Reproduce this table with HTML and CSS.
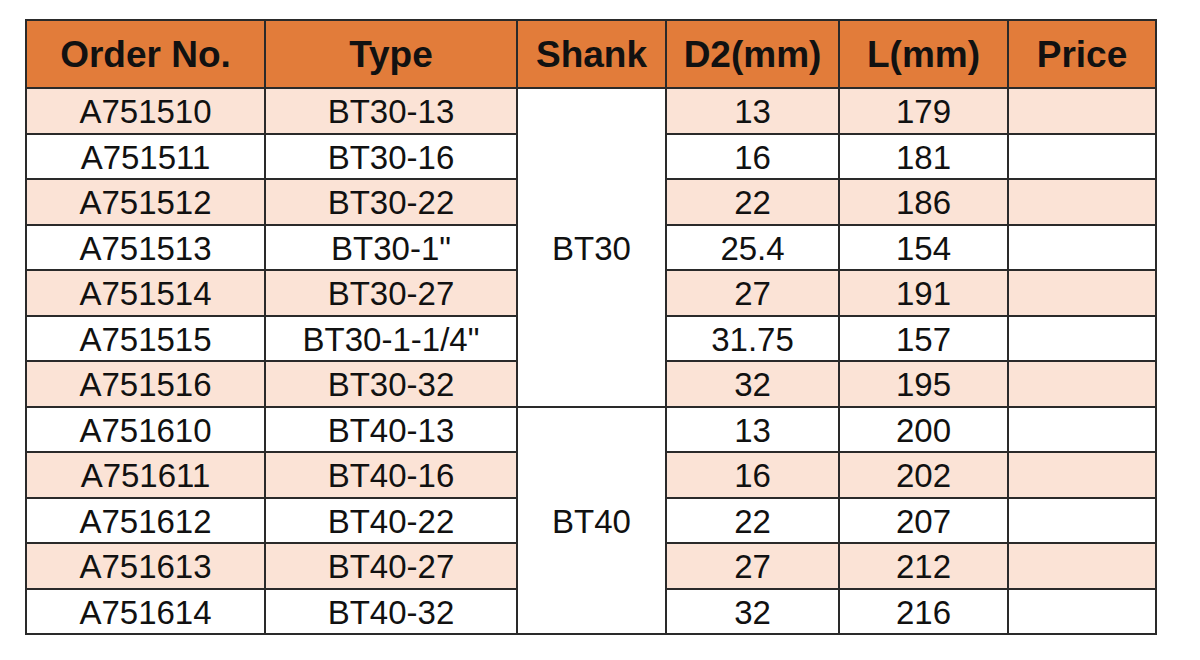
FILE: index.html
```html
<!DOCTYPE html>
<html lang="en">
<head>
    <meta charset="UTF-8">
    <title>BT Holder Price List</title>
    <link rel="stylesheet" href="styles.css">
</head>
<body>
    <table class="spec-table">
        <colgroup>
            <col class="c-order">
            <col class="c-type">
            <col class="c-shank">
            <col class="c-d2">
            <col class="c-len">
            <col class="c-price">
        </colgroup>
        <thead>
            <tr>
                <th>Order No.</th>
                <th>Type</th>
                <th>Shank</th>
                <th>D2(mm)</th>
                <th>L(mm)</th>
                <th>Price</th>
            </tr>
        </thead>
        <tbody>
            <tr class="shade">
                <td>A751510</td><td>BT30-13</td>
                <td class="shank" rowspan="7">BT30</td>
                <td>13</td><td>179</td><td></td>
            </tr>
            <tr><td>A751511</td><td>BT30-16</td><td>16</td><td>181</td><td></td></tr>
            <tr class="shade"><td>A751512</td><td>BT30-22</td><td>22</td><td>186</td><td></td></tr>
            <tr><td>A751513</td><td>BT30-1"</td><td>25.4</td><td>154</td><td></td></tr>
            <tr class="shade"><td>A751514</td><td>BT30-27</td><td>27</td><td>191</td><td></td></tr>
            <tr><td>A751515</td><td>BT30-1-1/4"</td><td>31.75</td><td>157</td><td></td></tr>
            <tr class="shade"><td>A751516</td><td>BT30-32</td><td>32</td><td>195</td><td></td></tr>
            <tr>
                <td>A751610</td><td>BT40-13</td>
                <td class="shank" rowspan="6">BT40</td>
                <td>13</td><td>200</td><td></td>
            </tr>
            <tr class="shade"><td>A751611</td><td>BT40-16</td><td>16</td><td>202</td><td></td></tr>
            <tr><td>A751612</td><td>BT40-22</td><td>22</td><td>207</td><td></td></tr>
            <tr class="shade"><td>A751613</td><td>BT40-27</td><td>27</td><td>212</td><td></td></tr>
            <tr><td>A751614</td><td>BT40-32</td><td>32</td><td>216</td><td></td></tr>
        </tbody>
    </table>
</body>
</html>
```

FILE: styles.css
```css
body {
    margin: 0;
    padding: 19px 25px;
    background: #ffffff;
    font-family: 'Liberation Sans', Arial, sans-serif;
    color: #111;
}
.spec-table {
    border-collapse: collapse;
    table-layout: fixed;
    width: 1130px;
    border: 2px solid #2a2a2a;
}
.c-order { width: 239px; }
.c-type { width: 252px; }
.c-shank { width: 149px; }
.c-d2 { width: 173px; }
.c-len { width: 169px; }
.c-price { width: 148px; }
th, td {
    border: 2px solid #2a2a2a;
    text-align: center;
    vertical-align: middle;
    padding: 0;
    white-space: nowrap;
}
th {
    background: #e27c3a;
    font-size: 37px;
    font-weight: bold;
    height: 66px;
    line-height: 1;
}
td {
    font-size: 33px;
    height: 41.5px;
    line-height: 1;
    padding-top: 2px;
}
.shade td {
    background: #fbe3d6;
}
.shade td.shank,
td.shank {
    background: #ffffff;
}
```
